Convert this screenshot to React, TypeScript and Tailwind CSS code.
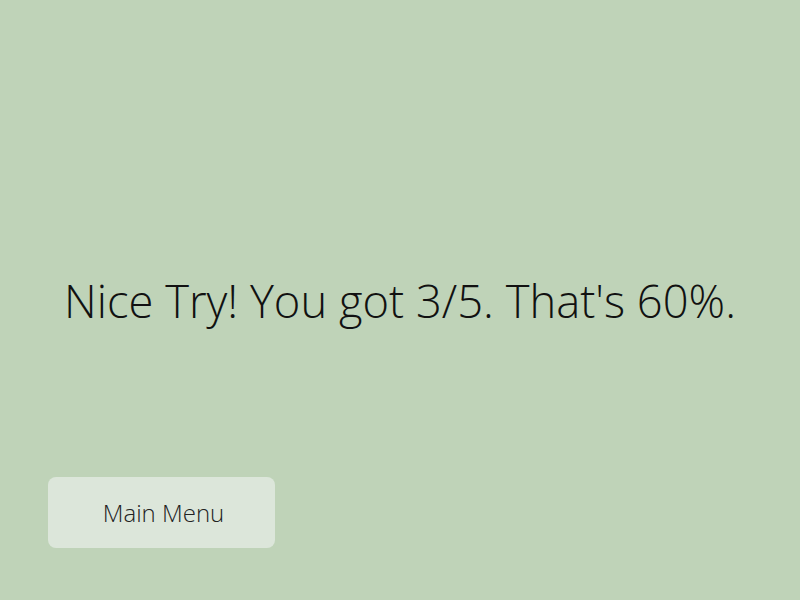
export default function App() {
  return (
    <div
      className="flex h-[600px] w-full flex-col bg-[#bfd3b8] px-[48px] pt-[271px] text-[#111]"
      style={{ fontFamily: '"Open Sans", sans-serif' }}
    >
      <h1 className="text-center text-[45.3px] leading-[60px] font-light">
        Nice Try! You got 3/5. That's 60%.
      </h1>
      <button className="mt-[146px] h-[71px] w-[227px] rounded-lg bg-[#dce6da] pl-[4px] text-[24px] font-light text-[#222]">
        Main Menu
      </button>
    </div>
  )
}
